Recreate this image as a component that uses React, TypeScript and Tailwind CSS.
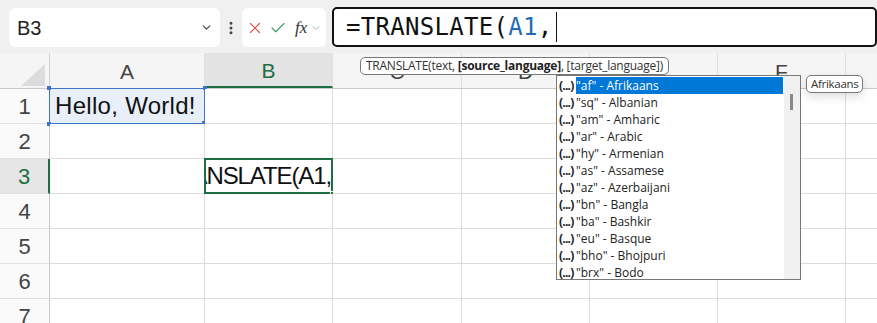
import React from "react";
import { X, Check, ChevronDown, EllipsisVertical } from "lucide-react";

const cols = [
  { name: "A", w: 155 },
  { name: "B", w: 128 },
  { name: "C", w: 129 },
  { name: "D", w: 128 },
  { name: "E", w: 128 },
  { name: "F", w: 128 },
  { name: "G", w: 128 },
];

const langs: [string, string][] = [
  ["af", "Afrikaans"],
  ["sq", "Albanian"],
  ["am", "Amharic"],
  ["ar", "Arabic"],
  ["hy", "Armenian"],
  ["as", "Assamese"],
  ["az", "Azerbaijani"],
  ["bn", "Bangla"],
  ["ba", "Bashkir"],
  ["eu", "Basque"],
  ["bho", "Bhojpuri"],
  ["brx", "Bodo"],
];

function Cell({ r, c, w }: { r: number; c: number; w: number }) {
  const isA1 = r === 1 && c === 0;
  const isB3 = r === 3 && c === 1;
  return (
    <div
      className={`relative h-[35px] shrink-0 border-r border-b border-[#dcdcdc] ${
        isA1 ? "bg-[#e9eff9]" : "bg-white"
      }`}
      style={{ width: w }}
    >
      {isA1 && (
        <>
          <div className="absolute inset-[-1px] border-[1.5px] border-[#3d74c9]" />
          <div className="absolute left-[-3px] top-[-3px] w-[4px] h-[4px] bg-[#3d74c9]" />
          <div className="absolute right-[-3px] top-[-3px] w-[4px] h-[4px] bg-[#3d74c9]" />
          <div className="absolute left-[-3px] bottom-[-3px] w-[4px] h-[4px] bg-[#3d74c9]" />
          <div className="absolute right-[-3px] bottom-[-3px] w-[5px] h-[5px] bg-[#3d74c9]" />
          <div className="absolute inset-0 flex items-center pl-[5px] text-[24px] text-[#111] whitespace-nowrap font-['Liberation_Sans',sans-serif] tracking-[0.3px]">
            Hello, World!
          </div>
        </>
      )}
      {isB3 && (
        <>
          <div className="absolute inset-0 flex items-center justify-end overflow-hidden pr-[1px] text-[24px] text-[#111] whitespace-nowrap font-['Liberation_Sans',sans-serif] tracking-[-1.1px]">
            =TRANSLATE(A1,
          </div>
          <div className="absolute inset-[-1px] border-2 border-[#1e6e42]" />
          <div className="absolute right-[-4px] bottom-[-4px] w-[6px] h-[6px] bg-[#1e6e42] border border-white" />
        </>
      )}
    </div>
  );
}

export default function App() {
  return (
    <div className="relative w-[877px] h-[323px] overflow-hidden bg-white font-['Liberation_Sans',sans-serif]">
      {/* Toolbar */}
      <div className="h-[53px] bg-[#f0f0f0] flex items-start pt-[8px] pl-[9px] gap-0">
        <div className="w-[211px] h-[39px] bg-white rounded-[6px] flex items-center pl-[8px] pr-[7px]">
          <span className="text-[20px] text-[#222] flex-1">B3</span>
          <ChevronDown size={13} strokeWidth={2} className="text-[#444]" />
        </div>
        <div className="w-[22px] h-[39px] flex items-center justify-center">
          <EllipsisVertical size={16} strokeWidth={2.5} className="text-[#444]" />
        </div>
        <div className="w-[84px] h-[39px] bg-white rounded-[6px] flex items-center pl-[4px]">
          <X size={18} strokeWidth={1.5} className="text-[#d9534f]" />
          <Check size={18} strokeWidth={1.5} className="text-[#3f9a62] ml-[5px]" />
          <span className="ml-[8px] text-[17px] italic text-[#333] font-['Liberation_Serif',serif]">fx</span>
          <ChevronDown size={12} strokeWidth={1.5} className="text-[#999] ml-[3px]" />
        </div>
        <div className="ml-[6px] flex-1 h-[40px] mt-[-1px] bg-white border-2 border-[#111] rounded-[5px] flex items-center pl-[12px] text-[24px] text-[#111] font-['DejaVu_Sans_Mono',monospace] tracking-[0.3px]">
          <span>=TRANSLATE(</span>
          <span className="text-[#1f6db4]">A1</span>
          <span>,</span>
          <span className="w-[1px] h-[30px] bg-[#111] ml-[3px]" />
        </div>
      </div>

      {/* Column headers */}
      <div className="flex h-[36px] bg-[#f5f5f5] border-b border-[#c9c9c9]">
        <div className="relative w-[50px] shrink-0 border-r border-[#d4d4d4]">
          <svg className="absolute left-[19px] top-[11px]" width="28" height="23" viewBox="0 0 28 23">
            <polygon points="26,0 26,22 2,22" fill="#dcdcdc" />
          </svg>
        </div>
        {cols.map((c) => (
          <div
            key={c.name}
            className={`shrink-0 flex items-center justify-center pt-[3px] text-[21px] border-r border-[#e0e0e0] ${
              c.name === "B"
                ? "bg-[#e3e3e3] text-[#1e6e42] border-b-2 border-b-[#1e6e42]"
                : "text-[#444]"
            }`}
            style={{ width: c.w }}
          >
            {c.name}
          </div>
        ))}
      </div>

      {/* Rows */}
      {[1, 2, 3, 4, 5, 6, 7].map((r) => (
        <div key={r} className="flex">
          <div
            className={`w-[50px] h-[35px] shrink-0 flex items-center justify-center text-[22px] border-b border-[#e0e0e0] ${
              r === 3
                ? "bg-[#e6e6e6] text-[#1e6e42] border-r-2 border-r-[#1e6e42]"
                : "bg-[#fafafa] text-[#444] border-r border-r-[#c9c9c9]"
            }`}
          >
            {r}
          </div>
          {cols.map((c, i) => (
            <Cell key={c.name} r={r} c={i} w={c.w} />
          ))}
        </div>
      ))}

      {/* Function tooltip */}
      <div className="absolute left-[360px] top-[57px] h-[18px] px-[5px] bg-white border border-[#777] rounded-[5px] flex items-center text-[12px] text-[#333] whitespace-nowrap font-['Open_Sans',sans-serif] tracking-[-0.25px]">
        TRANSLATE(text,&nbsp;<b className="font-bold text-[#222]">[source_language]</b>, [target_language])
      </div>

      {/* Dropdown */}
      <div className="absolute left-[556px] top-[75px] w-[245px] h-[205px] bg-white border border-[#777] flex font-['Open_Sans',sans-serif] text-[12px] text-[#222]">
        <div className="flex-1 flex flex-col pt-[1px]">
          {langs.map(([code, name], i) => (
            <div key={code} className="h-[17px] flex items-center">
              <span className="w-[19px] pl-[2px] text-[12px] font-bold text-[#222] tracking-[-0.8px] shrink-0">(...)</span>
              <span
                className={`h-[17px] flex items-center whitespace-nowrap ${
                  i === 0 ? "bg-[#0078d7] text-white w-[207px]" : ""
                }`}
              >
                "{code}" - {name}
              </span>
            </div>
          ))}
        </div>
        <div className="w-[16px] bg-[#f0f0f0] relative">
          <div className="absolute left-[6px] top-[18px] w-[3px] h-[16px] bg-[#888]" />
        </div>
      </div>

      {/* Afrikaans tip */}
      <div className="absolute left-[806px] top-[75px] h-[18px] px-[4px] bg-white border border-[#777] rounded-[5px] flex items-center text-[11.5px] tracking-[-0.3px] text-[#333] font-['Open_Sans',sans-serif] shadow-[0_4px_8px_rgba(0,0,0,0.12)]">
        Afrikaans
      </div>
    </div>
  );
}
